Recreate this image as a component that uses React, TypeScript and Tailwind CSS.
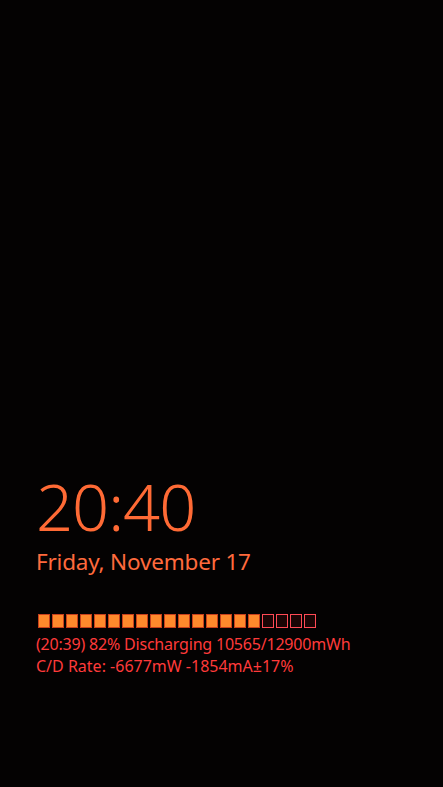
import React from "react";

export default function App() {
  const total = 20;
  const filled = 16;
  return (
    <div className="w-[443px] h-[787px] bg-[#040202] overflow-hidden" style={{ fontFamily: '"Noto Sans", "Open Sans", sans-serif' }}>
      <div className="pl-[36px] pt-[468px] flex flex-col">
        <div className="text-[65px] leading-[76px] font-light text-[#ff6a35] tracking-[-1px]">20:40</div>
        <div className="mt-[3px] text-[22.5px] leading-[30px] text-[#ff6a3d] tracking-[-0.2px]">Friday, November 17</div>
        <div className="mt-[37px] flex gap-[2px] pl-[2px]">
          {Array.from({ length: total }).map((_, i) =>
            i < filled ? (
              <div key={i} className="w-[12px] h-[14px] bg-[#ff8a2c] border border-[#c8401c]" />
            ) : (
              <div key={i} className="w-[12px] h-[14px] bg-[#1a0505] border-[1.5px] border-[#ff4a55]" />
            )
          )}
        </div>
        <div className="mt-[5px] text-[16px] leading-[22px] text-[#ff3a3a] tracking-[-0.2px]">(20:39) 82% Discharging 10565/12900mWh</div>
        <div className="text-[16px] leading-[22px] text-[#ff3a3a] tracking-[0px]">C/D Rate: -6677mW -1854mA±17%</div>
      </div>
    </div>
  );
}
